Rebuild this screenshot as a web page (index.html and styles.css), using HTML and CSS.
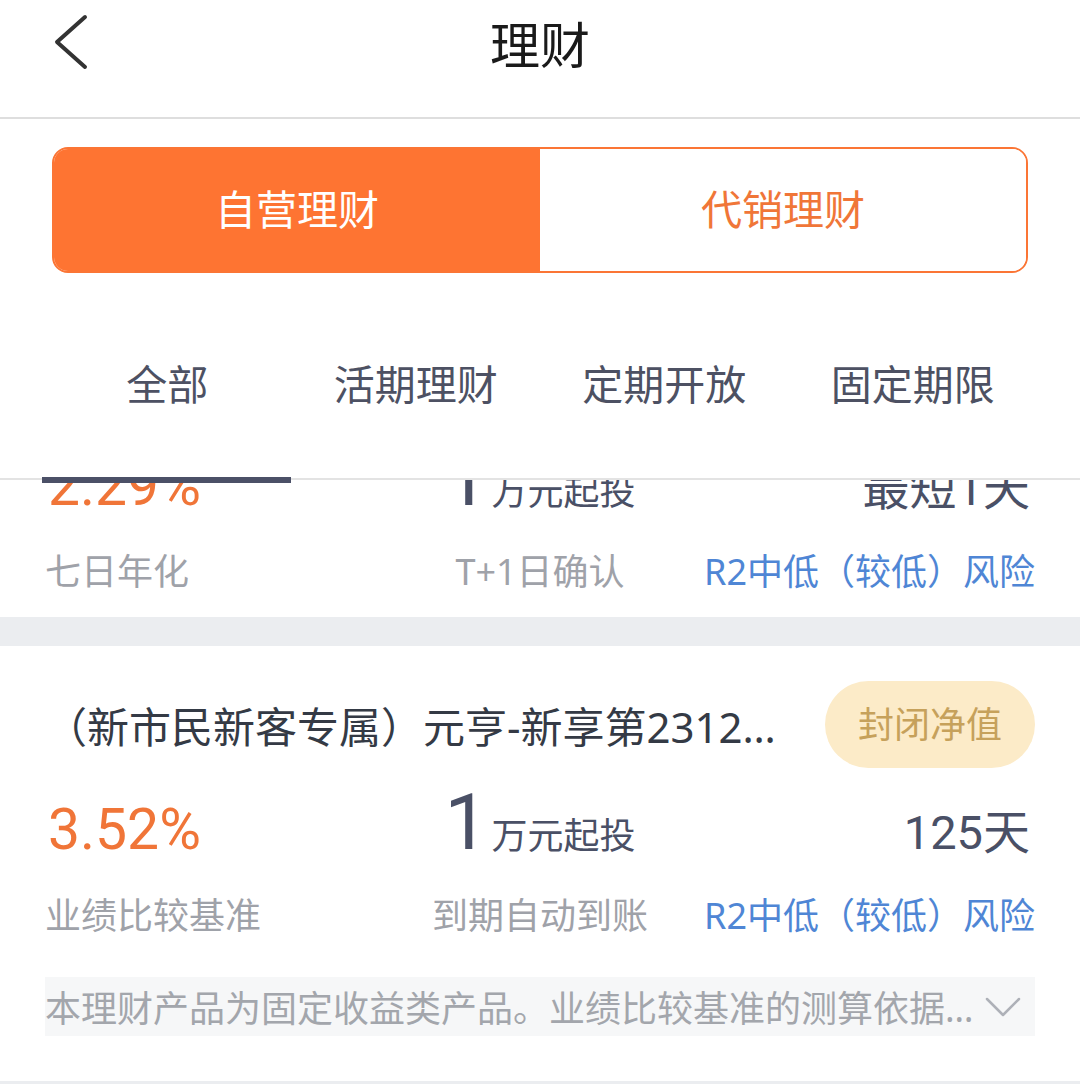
FILE: index.html
```html
<!DOCTYPE html>
<html lang="zh-CN">
<head>
    <meta charset="UTF-8">
    <meta name="viewport" content="width=device-width, initial-scale=1.0">
    <title>理财</title>
    <link rel="stylesheet" href="styles.css">
</head>
<body>
    <div class="page">
        <header class="topbar">
            <a class="back" href="#">
                <svg width="36" height="56" viewBox="0 0 36 56">
                    <polyline points="31,3 3,28 31,53" fill="none" stroke="#333" stroke-width="4" stroke-linecap="round" stroke-linejoin="round"/>
                </svg>
            </a>
            <h1>理财</h1>
            <span></span>
        </header>

        <div class="segment">
            <button class="segment-item active">自营理财</button>
            <button class="segment-item">代销理财</button>
        </div>

        <nav class="tabs">
            <a class="tab active" href="#">全部</a>
            <a class="tab" href="#">活期理财</a>
            <a class="tab" href="#">定期开放</a>
            <a class="tab" href="#">固定期限</a>
        </nav>

        <div class="list">
            <div class="card card-scrolled">
                <div class="figures">
                    <div class="rate">2.29%</div>
                    <div class="amount"><span class="amount-num">1</span><span class="amount-unit">万元起投</span></div>
                    <div class="term">最短1天</div>
                </div>
                <div class="labels">
                    <span>七日年化</span>
                    <span class="mid">T+1日确认</span>
                    <span class="risk">R2中低（较低）风险</span>
                </div>
            </div>

            <div class="card">
                <div class="card-head">
                    <h2 class="card-title">（新市民新客专属）元亨-新享第2312…</h2>
                    <span class="badge">封闭净值</span>
                </div>
                <div class="figures">
                    <div class="rate">3.52%</div>
                    <div class="amount"><span class="amount-num">1</span><span class="amount-unit">万元起投</span></div>
                    <div class="term">125天</div>
                </div>
                <div class="labels">
                    <span>业绩比较基准</span>
                    <span class="mid">到期自动到账</span>
                    <span class="risk">R2中低（较低）风险</span>
                </div>
                <div class="notice">
                    <span class="notice-text">本理财产品为固定收益类产品。业绩比较基准的测算依据…</span>
                    <svg width="36" height="22" viewBox="0 0 36 22">
                        <polyline points="2,3 18,19 34,3" fill="none" stroke="#aeb1b8" stroke-width="2.5" stroke-linecap="round" stroke-linejoin="round"/>
                    </svg>
                </div>
            </div>
        </div>
    </div>
</body>
</html>
```

FILE: styles.css
```css
* {
    margin: 0;
    padding: 0;
    box-sizing: border-box;
}

body {
    font-family: "Noto Sans", "Noto Sans CJK SC", sans-serif;
    background-color: #fff;
    color: #333;
}

.page {
    height: 100vh;
    display: flex;
    flex-direction: column;
    overflow: hidden;
}

/* top bar */
.topbar {
    height: 119px;
    padding-top: 7px;
    display: grid;
    grid-template-columns: 1fr auto 1fr;
    align-items: start;
    border-bottom: 2px solid #dedede;
}

.back {
    display: flex;
    align-items: center;
    height: 70px;
    padding-left: 54px;
}

.topbar h1 {
    font-family: "Noto Sans CJK SC", sans-serif;
    font-size: 50px;
    font-weight: 400;
    line-height: 70px;
    color: #1a1a1a;
}

/* segment */
.segment {
    display: flex;
    height: 126px;
    margin: 28px 52px 0;
    border: 2px solid #fb7535;
    border-radius: 16px;
    overflow: hidden;
}

.segment-item {
    flex: 1;
    border: none;
    padding-bottom: 6px;
    background-color: #fff;
    color: #f07638;
    font-family: "Noto Sans CJK SC", sans-serif;
    font-size: 41px;
}

.segment-item.active {
    background-color: #fe7432;
    color: #fff;
}

/* tabs */
.tabs {
    position: relative;
    display: grid;
    grid-template-columns: repeat(4, 1fr);
    padding: 81px 43px 68px;
    border-bottom: 2px solid #e3e3e3;
}

.tab {
    position: relative;
    text-align: center;
    font-family: "Noto Sans CJK SC", sans-serif;
    font-size: 41px;
    line-height: 56px;
    color: #4d5163;
    text-decoration: none;
}

.tab.active::after {
    content: "";
    position: absolute;
    left: -1px;
    right: 1px;
    bottom: -73px;
    height: 6px;
    background-color: #4b5067;
}

/* list */
.list {
    flex: 1;
    overflow: hidden;
    background-color: #ebedf0;
}

.card {
    background-color: #fff;
    padding: 35px 45px 20px;
    margin-bottom: 29px;
}

.card-scrolled {
    margin-top: -91px;
}

.card-head {
    display: flex;
    align-items: center;
    gap: 34px;
    height: 87px;
}

.card-title {
    flex: 1;
    min-width: 0;
    font-size: 42px;
    font-weight: 400;
    color: #343a45;
    white-space: nowrap;
    overflow: hidden;
}

.badge {
    flex: none;
    width: 210px;
    height: 87px;
    border-radius: 44px;
    background-color: #fcebc8;
    color: #c6a15b;
    font-size: 36px;
    line-height: 87px;
    text-align: center;
}

.figures {
    display: grid;
    grid-template-columns: 1fr auto 1fr;
    align-items: baseline;
    margin-top: 16px;
    font-family: Roboto, "Noto Sans CJK SC", sans-serif;
    line-height: 1;
    font-size: 36px;
}

.rate {
    padding-left: 3px;
    font-size: 57px;
    color: #f07538;
}

.amount {
    color: #4a5066;
}

.amount-num {
    font-size: 78px;
    margin-right: 3px;
}

.amount-unit {
    font-family: "Noto Sans CJK SC", sans-serif;
    font-size: 36px;
}

.term {
    text-align: right;
    padding-right: 5px;
    font-size: 47px;
    color: #4a5066;
}

.labels {
    display: grid;
    grid-template-columns: 1fr auto 1fr;
    margin-top: 29px;
    font-size: 36px;
    line-height: 50px;
    color: #9fa2a9;
}

.labels .risk {
    text-align: right;
    color: #4f86d5;
}

.notice {
    display: flex;
    align-items: center;
    justify-content: space-between;
    height: 59px;
    margin: 36px 0 25px;
    padding-right: 14px;
    background-color: #f6f7f8;
}

.notice-text {
    font-size: 36px;
    color: #a3a6ac;
    white-space: nowrap;
}
```
